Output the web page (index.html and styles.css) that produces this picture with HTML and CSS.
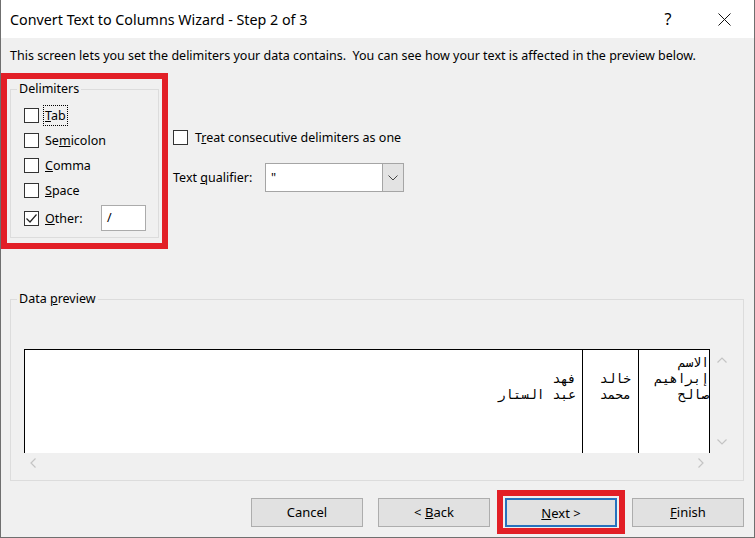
FILE: index.html
```html
<!DOCTYPE html>
<html lang="en">
<head>
    <meta charset="UTF-8">
    <title>Convert Text to Columns Wizard - Step 2 of 3</title>
    <link rel="stylesheet" href="styles.css">
</head>
<body>

<div class="window">
    <div class="titlebar">
        <span class="title">Convert Text to Columns Wizard - Step 2 of 3</span>
        <span class="title-btn help">?</span>
        <span class="title-btn close">
            <svg width="13" height="13" viewBox="0 0 13 13"><path d="M0.5 0.5 L12.5 12.5 M12.5 0.5 L0.5 12.5" stroke="#111" stroke-width="1" fill="none"/></svg>
        </span>
    </div>

    <div class="content">
        <p class="intro">This screen lets you set the delimiters your data contains.&nbsp; You can see how your text is affected in the preview below.</p>

        <div class="options">
            <div class="mark mark-delims">
                <div class="group delims">
                    <div class="group-title">Delimiters</div>
                    <div class="check-row first"><span class="box"></span><span class="lbl focus"><u>T</u>ab</span></div>
                    <div class="check-row"><span class="box"></span><span class="lbl">Se<u>m</u>icolon</span></div>
                    <div class="check-row"><span class="box"></span><span class="lbl"><u>C</u>omma</span></div>
                    <div class="check-row"><span class="box"></span><span class="lbl"><u>S</u>pace</span></div>
                    <div class="check-row other-row">
                        <span class="box">
                            <svg width="13" height="13" viewBox="0 0 13 13"><path d="M1.5 6.5 L5 10 L11.5 2.5" stroke="#222" stroke-width="1.2" fill="none"/></svg>
                        </span>
                        <span class="lbl"><u>O</u>ther:</span>
                        <span class="other-input">/</span>
                    </div>
                </div>
            </div>

            <div class="side">
                <div class="check-row treat"><span class="box"></span><span class="lbl">T<u>r</u>eat consecutive delimiters as one</span></div>
                <div class="qualifier">
                    <span class="qual-label">Text <u>q</u>ualifier:</span>
                    <div class="select">
                        <span class="select-value">"</span>
                        <span class="select-arrow">
                            <svg width="10" height="6" viewBox="0 0 10 6"><path d="M0.5 0.5 L5 5 L9.5 0.5" stroke="#444" stroke-width="1" fill="none"/></svg>
                        </span>
                    </div>
                </div>
            </div>
        </div>

        <div class="group preview">
            <div class="group-title">Data <u>p</u>review</div>
            <div class="preview-grid">
                <div class="sheet">
                    <div class="col col-a">
                        <div class="cell"></div>
                        <div class="cell">فهد</div>
                        <div class="cell">عبد الستار</div>
                    </div>
                    <div class="col col-b">
                        <div class="cell"></div>
                        <div class="cell">خالد</div>
                        <div class="cell">محمد</div>
                    </div>
                    <div class="col col-c">
                        <div class="cell">الاسم</div>
                        <div class="cell">إبراهيم</div>
                        <div class="cell">صالح</div>
                    </div>
                </div>
                <div class="vscroll">
                    <svg width="10" height="6" viewBox="0 0 10 6"><path d="M0.5 5.5 L5 1 L9.5 5.5" stroke="#c4c4c4" stroke-width="1.2" fill="none"/></svg>
                    <svg width="10" height="6" viewBox="0 0 10 6"><path d="M0.5 0.5 L5 5 L9.5 0.5" stroke="#c4c4c4" stroke-width="1.2" fill="none"/></svg>
                </div>
                <div class="hscroll">
                    <svg width="6" height="10" viewBox="0 0 6 10"><path d="M5.5 0.5 L1 5 L5.5 9.5" stroke="#c4c4c4" stroke-width="1.2" fill="none"/></svg>
                    <svg width="6" height="10" viewBox="0 0 6 10"><path d="M0.5 0.5 L5 5 L0.5 9.5" stroke="#c4c4c4" stroke-width="1.2" fill="none"/></svg>
                </div>
            </div>
        </div>

        <div class="actions">
            <button class="btn">Cancel</button>
            <button class="btn back">&lt; <u>B</u>ack</button>
            <span class="mark mark-next"><button class="btn default"><u>N</u>ext &gt;</button></span>
            <button class="btn finish"><u>F</u>inish</button>
        </div>
    </div>
</div>

</body>
</html>
```

FILE: styles.css
```css
body {
    margin: 0;
    font-family: "Noto Sans", sans-serif;
    font-size: 12.5px;
    color: #000;
}
.window {
    width: 755px;
    height: 538px;
    box-sizing: border-box;
    border: 1px solid #6f6f6f;
    border-top: none;
    background-color: #f0f0f0;
}
.titlebar {
    height: 38px;
    background-color: #fff;
    display: flex;
    align-items: center;
}
.title {
    flex: 1;
    margin-left: 9px;
    font-size: 14.3px;
}
.title-btn {
    width: 56px;
    display: flex;
    justify-content: center;
    align-items: center;
}
.help {
    font-size: 16px;
}
.close {
    margin-right: 2px;
}
.intro {
    margin: 10px 0 0 9px;
    line-height: 16px;
}
.options {
    display: flex;
    align-items: flex-start;
    margin-top: 9px;
}
.mark {
    border: 6px solid #e21f26;
}
.mark-delims {
    width: 167px;
    height: 176px;
    box-sizing: border-box;
    padding: 10px 3px 5px 3px;
}
.group {
    border: 1px solid #dcdcdc;
}
.group-title {
    display: table;
    margin: -9px 0 0 -7px;
    padding: 0 2px;
    background-color: #f0f0f0;
    line-height: 16px;
}
.delims {
    height: 149px;
    box-sizing: border-box;
    padding: 0 12px 0 13px;
}
.check-row {
    display: flex;
    align-items: center;
    height: 25px;
}
.check-row.first {
    margin-top: 6px;
}
.box {
    width: 15px;
    height: 15px;
    box-sizing: border-box;
    border: 1px solid #333;
    background-color: #fff;
    display: flex;
    align-items: center;
    justify-content: center;
    flex-shrink: 0;
}
.lbl {
    margin-left: 4px;
    padding: 0 1px;
    border: 1px dotted transparent;
    line-height: 19px;
}
.lbl.focus {
    border-color: #000;
}
.other-row {
    height: 30px;
}
.other-input {
    margin-left: auto;
    width: 45px;
    height: 26px;
    box-sizing: border-box;
    border: 1px solid #ababab;
    background-color: #fff;
    padding-left: 5px;
    line-height: 24px;
}
.side {
    margin-left: 5px;
    padding-top: 53px;
}
.treat {
    height: 22px;
}
.treat .lbl {
    margin-left: 5px;
}
.qualifier {
    display: flex;
    align-items: center;
    margin-top: 15px;
}
.qual-label {
    width: 92px;
}
.select {
    width: 139px;
    height: 29px;
    box-sizing: border-box;
    border: 1px solid #a5a5a5;
    background-color: #fff;
    display: flex;
}
.select-value {
    flex: 1;
    padding-left: 5px;
    line-height: 27px;
}
.select-arrow {
    width: 20px;
    background-color: #e3e3e3;
    border-left: 1px solid #a5a5a5;
    display: flex;
    align-items: center;
    justify-content: center;
}
.preview {
    width: 734px;
    box-sizing: border-box;
    margin: 50px 0 0 9px;
    padding: 0 0 7px 13px;
}
.preview-grid {
    margin-top: 42px;
    display: grid;
    grid-template-columns: 686px 24px;
    grid-template-rows: 104px 20px;
}
.sheet {
    display: flex;
    background-color: #fff;
    border: 1px solid #000;
    border-bottom: none;
    overflow: hidden;
}
.col {
    direction: rtl;
    padding-top: 5px;
    font-family: "DejaVu Sans Mono", monospace;
    font-size: 13px;
    overflow: hidden;
}
.cell {
    height: 16px;
    line-height: 16px;
    white-space: nowrap;
}
.col-a {
    width: 558px;
    box-sizing: border-box;
    border-right: 1px solid #000;
    padding-right: 6px;
}
.col-b {
    width: 56px;
    box-sizing: border-box;
    border-right: 1px solid #000;
    padding-right: 7px;
}
.col-c {
    flex: 1;
}
.vscroll {
    display: flex;
    flex-direction: column;
    justify-content: space-between;
    align-items: center;
    padding: 8px 0 8px;
}
.hscroll {
    display: flex;
    justify-content: space-between;
    align-items: center;
    padding: 0 6px;
}
.actions {
    display: flex;
    justify-content: flex-end;
    align-items: center;
    margin-top: 9px;
    padding-right: 10px;
}
.btn {
    width: 112px;
    height: 29px;
    box-sizing: border-box;
    border: 1px solid #adadad;
    background-color: #e1e1e1;
    font-family: "Noto Sans", sans-serif;
    font-size: 13px;
    color: #000;
    padding: 0;
}
.back {
    margin-left: 15px;
}
.mark-next {
    display: flex;
    margin-left: 7px;
    padding: 2px 2px 1px 2px;
}
.btn.default {
    border: 2px solid #2672be;
}
.finish {
    margin-left: 7px;
}
```
